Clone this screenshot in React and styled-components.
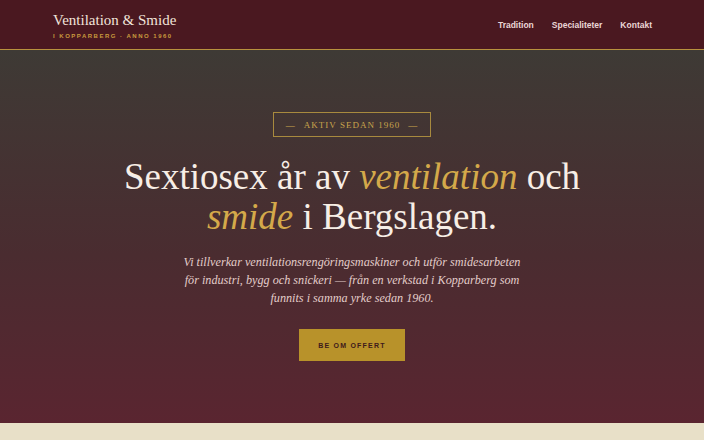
import React from 'react';
import styled, { createGlobalStyle } from 'styled-components';

const GlobalStyle = createGlobalStyle`
  html, body {
    margin: 0;
    padding: 0;
    background: #e8e0c8;
  }
  * { box-sizing: border-box; }
`;

const Header = styled.header`
  background: #4a1820;
  border-bottom: 1px solid #b8913e;
  height: 50px;
`;

const HeaderInner = styled.div`
  max-width: 600px;
  margin: 0 auto;
  height: 100%;
  display: flex;
  align-items: center;
  justify-content: space-between;
`;

const Brand = styled.div`
  display: flex;
  flex-direction: column;
  gap: 5px;
  padding-top: 2px;
  padding-left: 1px;
`;

const BrandName = styled.span`
  font-family: "Liberation Serif", serif;
  font-size: 15px;
  color: #f1e4da;
  line-height: 1;
`;

const BrandTag = styled.span`
  font-family: "Liberation Sans", sans-serif;
  font-size: 6px;
  font-weight: 700;
  letter-spacing: 1.5px;
  color: #c89a3e;
  line-height: 1;
`;

const Nav = styled.nav`
  display: flex;
  gap: 18px;
`;

const NavLink = styled.a`
  font-family: "Liberation Sans", sans-serif;
  font-size: 8.5px;
  font-weight: 700;
  color: #ead6d6;
  text-decoration: none;
`;

const Hero = styled.section`
  background: linear-gradient(180deg, #3e3a35 0%, #4a2c30 55%, #5a2530 100%);
  height: 373px;
  display: flex;
  flex-direction: column;
  align-items: center;
  padding-top: 62px;
`;

const Badge = styled.div`
  border: 1px solid #a88a3e;
  padding: 7px 12px 6px;
  font-family: "Liberation Serif", serif;
  font-size: 9px;
  letter-spacing: 1px;
  color: #c9a44c;
  display: flex;
  gap: 8px;
`;

const Title = styled.h1`
  margin: 20px 0 0;
  font-family: "Liberation Serif", serif;
  font-weight: 400;
  font-size: 37px;
  line-height: 40px;
  color: #f7eee6;
  text-align: center;
`;

const Accent = styled.em`
  color: #d4a94a;
`;

const Lead = styled.p`
  margin: 16px 0 0;
  max-width: 346px;
  font-family: "Liberation Serif", serif;
  font-style: italic;
  font-size: 12.2px;
  line-height: 18px;
  color: #e3cdca;
  text-align: center;
`;

const Cta = styled.a`
  margin-top: 22px;
  width: 106px;
  height: 32px;
  display: flex;
  align-items: center;
  justify-content: center;
  background: #b8922a;
  font-family: "Liberation Sans", sans-serif;
  font-size: 7px;
  font-weight: 700;
  letter-spacing: 1.2px;
  color: #3e1a1c;
  text-decoration: none;
`;

const Below = styled.section`
  background: #e8e0c8;
  height: 17px;
`;

export default function App() {
  return (
    <>
      <GlobalStyle />
      <Header>
        <HeaderInner>
          <Brand>
            <BrandName>Ventilation &amp; Smide</BrandName>
            <BrandTag>I KOPPARBERG · ANNO 1960</BrandTag>
          </Brand>
          <Nav>
            <NavLink href="#tradition">Tradition</NavLink>
            <NavLink href="#specialiteter">Specialiteter</NavLink>
            <NavLink href="#kontakt">Kontakt</NavLink>
          </Nav>
        </HeaderInner>
      </Header>
      <Hero>
        <Badge>
          <span>—</span>
          <span>AKTIV SEDAN 1960</span>
          <span>—</span>
        </Badge>
        <Title>
          Sextiosex år av <Accent>ventilation</Accent> och
          <br />
          <Accent>smide</Accent> i Bergslagen.
        </Title>
        <Lead>
          Vi tillverkar ventilationsrengöringsmaskiner och utför smidesarbeten
          för industri, bygg och snickeri — från en verkstad i Kopparberg som
          funnits i samma yrke sedan 1960.
        </Lead>
        <Cta href="#offert">BE OM OFFERT</Cta>
      </Hero>
      <Below />
    </>
  );
}
